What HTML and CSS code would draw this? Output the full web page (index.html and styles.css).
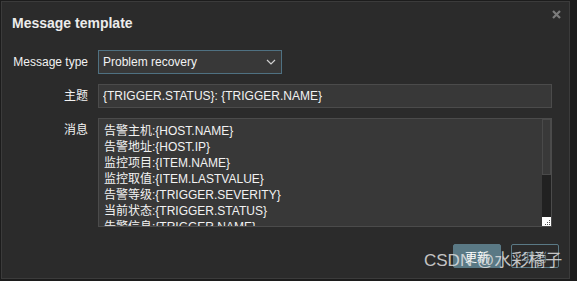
FILE: index.html
```html
<!DOCTYPE html>
<html lang="zh-CN">
<head>
    <meta charset="UTF-8">
    <title>Message template</title>
    <link rel="stylesheet" href="styles.css">
</head>
<body>

<div class="dialog">
    <div class="dialog-header">
        <h4>Message template</h4>
        <button class="btn-close" type="button" title="Close">
            <svg width="9" height="9" viewBox="0 0 9 9"><path d="M1 1L8 8M8 1L1 8" stroke="#7b7b7b" stroke-width="2.2"/></svg>
        </button>
    </div>

    <form class="form-grid" action="#">
        <label for="type" class="form-label">Message type</label>
        <div class="select-wrap">
            <select id="type" class="form-select">
                <option>Problem</option>
                <option selected>Problem recovery</option>
                <option>Problem update</option>
            </select>
            <svg class="chevron" width="10" height="6" viewBox="0 0 10 6"><path d="M1 1L5 5L9 1" fill="none" stroke="#d0d0d0" stroke-width="1.2"/></svg>
        </div>

        <label for="subject" class="form-label">主题</label>
        <input type="text" id="subject" class="form-input" value="{TRIGGER.STATUS}: {TRIGGER.NAME}">

        <label for="message" class="form-label label-top">消息</label>
        <div class="textarea-wrap">
            <textarea id="message" class="form-textarea">告警主机:{HOST.NAME}
告警地址:{HOST.IP}
监控项目:{ITEM.NAME}
监控取值:{ITEM.LASTVALUE}
告警等级:{TRIGGER.SEVERITY}
当前状态:{TRIGGER.STATUS}
告警信息:{TRIGGER.NAME}
告警时间:{EVENT.DATE} {EVENT.TIME}
恢复时间:{EVENT.RECOVERY.DATE} {EVENT.RECOVERY.TIME}
持续时间:{EVENT.AGE}
事件ID:{EVENT.ID}</textarea>
            <div class="scrollbar">
                <div class="scroll-thumb"></div>
                <div class="resizer">
                    <svg width="9" height="9" viewBox="0 0 9 9"><path d="M7 3h1v1H7zM5 5h1v1H5zM7 5h1v1H7zM3 7h1v1H3zM5 7h1v1H5zM7 7h1v1H7z" fill="#555"/></svg>
                </div>
            </div>
        </div>
    </form>

    <div class="dialog-footer">
        <button type="button" class="btn btn-primary">更新</button>
        <button type="button" class="btn btn-alt">取消</button>
    </div>
</div>

<div class="watermark">CSDN @水彩橘子</div>

</body>
</html>
```

FILE: styles.css
```css
body {
    margin: 0;
    padding: 1px 0 0 1px;
    width: 577px;
    height: 281px;
    box-sizing: border-box;
    overflow: hidden;
    background-color: #1c1c1c;
    font-family: "Liberation Sans", Arial, "Noto Sans CJK SC", sans-serif;
    font-size: 12px;
    color: #f2f2f2;
    position: relative;
}

.dialog {
    width: 569px;
    height: 278px;
    box-sizing: border-box;
    background-color: #2b2b2b;
    border: 1px solid #3b3b3b;
    position: relative;
}

.dialog-header {
    height: 48px;
    box-sizing: border-box;
    padding: 12px 10px 0 10px;
}
.dialog-header h4 {
    margin: 0;
    font-size: 14px;
    line-height: 18px;
    font-weight: bold;
    color: #ececec;
}
.btn-close {
    position: absolute;
    top: 8px;
    right: 8px;
    width: 9px;
    height: 9px;
    padding: 0;
    border: none;
    background: none;
    cursor: pointer;
    display: flex;
}

.form-grid {
    display: grid;
    grid-template-columns: 76px 454px;
    column-gap: 10px;
    row-gap: 10px;
    padding: 0 10px;
}
.form-label {
    text-align: right;
    align-self: center;
    line-height: 14px;
}
.form-label.label-top {
    align-self: start;
    padding-top: 5px;
}

.select-wrap {
    position: relative;
    width: 184px;
}
.form-select {
    width: 184px;
    height: 24px;
    margin: 0;
    padding: 0 20px 0 4px;
    box-sizing: border-box;
    appearance: none;
    -webkit-appearance: none;
    background-color: #383838;
    border: 1px solid #4f7182;
    border-radius: 0;
    color: #f2f2f2;
    font-family: inherit;
    font-size: 12px;
    outline: none;
}
.chevron {
    position: absolute;
    right: 6px;
    top: 9px;
    pointer-events: none;
}

.form-input {
    width: 454px;
    height: 24px;
    margin: 0;
    padding: 0 4px;
    box-sizing: border-box;
    background-color: #383838;
    border: 1px solid #4b4b4b;
    border-radius: 0;
    color: #f2f2f2;
    font-family: inherit;
    font-size: 12px;
    outline: none;
}

.textarea-wrap {
    position: relative;
    width: 454px;
    height: 109px;
}
.form-textarea {
    width: 454px;
    height: 109px;
    margin: 0;
    padding: 4px 14px 4px 5px;
    box-sizing: border-box;
    background-color: #383838;
    border: 1px solid #4b4b4b;
    border-radius: 0;
    color: #f2f2f2;
    font-family: inherit;
    font-size: 12px;
    line-height: 16px;
    resize: none;
    overflow: hidden;
    outline: none;
    display: block;
}
.scrollbar {
    position: absolute;
    top: 1px;
    right: 1px;
    bottom: 1px;
    width: 9px;
    display: flex;
    flex-direction: column;
    background-color: #212121;
}
.scroll-thumb {
    height: 56px;
    box-sizing: border-box;
    background-color: #393939;
    border: 1px solid #4a4a4a;
}
.resizer {
    margin-top: auto;
    height: 9px;
    background-color: #ffffff;
    display: flex;
}

.dialog-footer {
    display: flex;
    justify-content: flex-end;
    gap: 10px;
    padding: 17px 10px 0 0;
}
.btn {
    height: 24px;
    min-width: 48px;
    padding: 0 8px;
    box-sizing: border-box;
    font-family: inherit;
    font-size: 12px;
    border-radius: 2px;
    cursor: pointer;
}
.btn-primary {
    background-color: #5a7985;
    border: 1px solid #5a7985;
    color: #ffffff;
}
.btn-alt {
    background-color: transparent;
    border: 1px solid #5a7985;
    color: #768d99;
}

.watermark {
    position: absolute;
    left: 424px;
    top: 251px;
    font-size: 17px;
    line-height: 20px;
    color: rgba(225, 225, 225, 0.85);
    white-space: nowrap;
    pointer-events: none;
}
```
